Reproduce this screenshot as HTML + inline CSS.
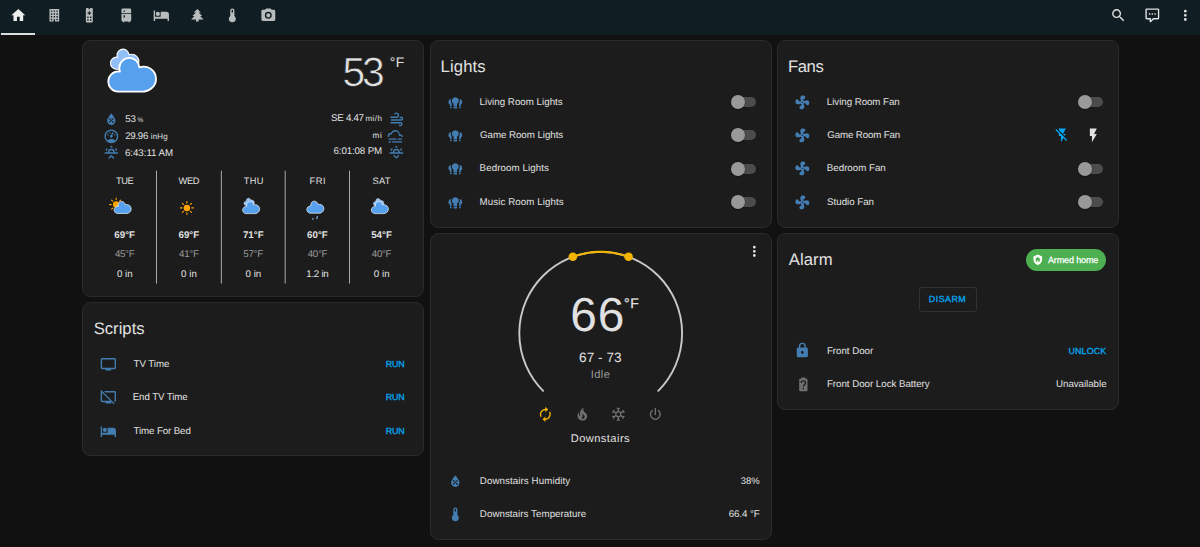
<!DOCTYPE html>
<html lang="en"><head><meta charset="utf-8"><title>Home</title>
<style>
html,body{margin:0;padding:0;background:#111}
body{width:1200px;height:547px;overflow:hidden;position:relative;font-family:"Liberation Sans",sans-serif;color:#e1e1e1;text-rendering:geometricPrecision}
.hdr{position:absolute;left:0;top:0;width:1200px;height:34.8px;background:#101e24;display:block}
main{display:block}
.ind{position:absolute;left:1.2px;top:32.7px;width:34px;height:2.2px;background:#dcdcdc}
.card{position:absolute;display:block;box-sizing:border-box;background:#1c1c1c;border:1px solid #2b2b2b;border-radius:8.3px}
.i{position:absolute;display:block;overflow:visible}
.ov{position:absolute;width:1200px;height:547px;display:block;pointer-events:none;overflow:visible}
.t{position:absolute;white-space:pre;line-height:1;display:block}
.trk{position:absolute;width:22.2px;height:9.8px;border-radius:5px;background:#4c4c4c}
.knb{position:absolute;width:14px;height:14px;border-radius:50%;background:#999;box-shadow:0 0.7px 1.4px rgba(0,0,0,.45)}
.chip{position:absolute;box-sizing:border-box;border-radius:11px;background:#4caf50}
.btn{position:absolute;box-sizing:border-box;border:1px solid #323232;border-radius:3px}
</style></head>
<body>
<header class="hdr">
<svg class="i" style="left:9.66px;top:6.76px;width:16.67px;height:16.67px;" viewBox="0 0 24 24"><path fill="#eeeeee" d="M10,20V14H14V20H19V12H22L12,3L2,12H5V20H10Z"/></svg>
<svg class="i" style="left:45.77px;top:6.76px;width:16.67px;height:16.67px;" viewBox="0 0 24 24"><path fill="#b9bcbd" d="M5,3V21H11V17.5H13V21H19V3H5M7,5H9V7H7V5M11,5H13V7H11V5M15,5H17V7H15V5M7,9H9V11H7V9M11,9H13V11H11V9M15,9H17V11H15V9M7,13H9V15H7V13M11,13H13V15H11V13M15,13H17V15H15V13M7,17H9V19H7V17M15,17H17V19H15V17Z"/></svg>
<svg class="i" style="left:81.37px;top:6.76px;width:16.67px;height:16.67px;" viewBox="0 0 24 24"><path fill="#b9bcbd" d="M8.5,1.5H15.5A1.5,1.5 0 0,1 17,3V21A1.5,1.5 0 0,1 15.500,22.5H8.5A1.5,1.5 0 0,1 7,21V3A1.5,1.5 0 0,1 8.5,1.500M11,1.500V3.300H13V1.500H11M11.200,6.300V8H9.500V9.600H11.200V11.300H12.800V9.600H14.500V8H12.800V6.300H11.200M9,13.800V15.800H11V13.800H9M13,13.800V15.800H15V13.800H13M9,17.800V19.800H11V17.800H9M13,17.800V19.800H15V17.800H13Z"/></svg>
<svg class="i" style="left:118.06px;top:6.76px;width:16.67px;height:16.67px;" viewBox="0 0 24 24"><path fill="#b9bcbd" d="M7,2H17A2,2 0 0,1 19,4V9H5V4A2,2 0 0,1 7,2M19,19A2,2 0 0,1 17,21V22H15V21H9V22H7V21A2,2 0 0,1 5,19V10H19V19M8,5V7H10V5H8M8,12V15H10V12H8Z"/></svg>
<svg class="i" style="left:152.86px;top:6.76px;width:16.67px;height:16.67px;" viewBox="0 0 24 24"><path fill="#b9bcbd" d="M19,7H11V14H3V5H1V20H3V17H21V20H23V11A4,4 0 0,0 19,7M7,13A3,3 0 0,0 10,10A3,3 0 0,0 7,7A3,3 0 0,0 4,10A3,3 0 0,0 7,13Z"/></svg>
<svg class="i" style="left:188.97px;top:6.76px;width:16.67px;height:16.67px;" viewBox="0 0 24 24"><path fill="#b9bcbd" d="M10,21V18H3L8,13H5L10,8H7L12,3L17,8H14L19,13H16L21,18H14V21H10Z"/></svg>
<svg class="i" style="left:224.36px;top:6.76px;width:16.67px;height:16.67px;" viewBox="0 0 24 24"><path fill="#b9bcbd" d="M15,13V5A3,3 0 0,0 12,2A3,3 0 0,0 9,5V13A5,5 0 0,0 7,17A5,5 0 0,0 12,22A5,5 0 0,0 17,17A5,5 0 0,0 15,13M12,4A1,1 0 0,1 13,5V8H11V5A1,1 0 0,1 12,4Z"/></svg>
<svg class="i" style="left:260.47px;top:6.76px;width:16.67px;height:16.67px;" viewBox="0 0 24 24"><path fill="#b9bcbd" d="M4,4H7L9,2H15L17,4H20A2,2 0 0,1 22,6V18A2,2 0 0,1 20,20H4A2,2 0 0,1 2,18V6A2,2 0 0,1 4,4M12,7A5,5 0 0,0 7,12A5,5 0 0,0 12,17A5,5 0 0,0 17,12A5,5 0 0,0 12,7M12,9A3,3 0 0,1 15,12A3,3 0 0,1 12,15A3,3 0 0,1 9,12A3,3 0 0,1 12,9Z"/></svg>
<div class="ind"></div>
<svg class="i" style="left:1109.66px;top:6.96px;width:16.67px;height:16.67px;" viewBox="0 0 24 24"><path fill="#e1e1e1" d="M9.5,3A6.5,6.5 0 0,1 16,9.5C16,11.11 15.41,12.59 14.44,13.73L14.71,14H15.5L20.5,19L19,20.5L14,15.5V14.71L13.73,14.44C12.59,15.41 11.11,16 9.5,16A6.5,6.5 0 0,1 3,9.5A6.5,6.5 0 0,1 9.5,3M9.5,5C7,5 5,7 5,9.5C5,12 7,14 9.5,14C12,14 14,12 14,9.5C14,7 12,5 9.5,5Z"/></svg>
<svg class="i" style="left:1143.57px;top:7.16px;width:16.67px;height:16.67px;" viewBox="0 0 24 24"><path fill="#e1e1e1" d="M9,22A1,1 0 0,1 8,21V18H4A2,2 0 0,1 2,16V4C2,2.89 2.9,2 4,2H20A2,2 0 0,1 22,4V16A2,2 0 0,1 20,18H13.9L10.2,21.71C10,21.9 9.75,22 9.5,22V22H9M10,16V19.08L13.08,16H20V4H4V16H10M17,11H15V9H17V11M13,11H11V9H13V11M9,11H7V9H9V11Z"/></svg>
<svg class="i" style="left:1177.07px;top:6.96px;width:16.67px;height:16.67px;" viewBox="0 0 24 24"><path fill="#e1e1e1" d="M12,16A2,2 0 0,1 14,18A2,2 0 0,1 12,20A2,2 0 0,1 10,18A2,2 0 0,1 12,16M12,10A2,2 0 0,1 14,12A2,2 0 0,1 12,14A2,2 0 0,1 10,12A2,2 0 0,1 12,10M12,4A2,2 0 0,1 14,6A2,2 0 0,1 12,8A2,2 0 0,1 10,6A2,2 0 0,1 12,4Z"/></svg>
</header>
<main>
<section class="card" aria-label="Weather" style="left:82px;top:40px;width:342px;height:257px">
<svg class="ov" style="left:-83px;top:-41px" viewBox="0 0 1200 547"><path transform="translate(96,29.79) scale(0.9)" d="M47.7,35.4c0-4.6-3.7-8.2-8.2-8.2c-1,0-1.9,0.2-2.8,0.5c-0.3-3.4-3.1-6.2-6.6-6.2c-3.700,0-6.700,3-6.700,6.700c0,0.800,0.200,1.600,0.400,2.300c-0.300-0.100-0.700-0.100-1-0.100c-3.700,0-6.700,3-6.700,6.700c0,3.600,2.900,6.600,6.500,6.700l17.200,0C44.200,43.300,47.700,39.800,47.700,35.400z" fill="#91C0F8" stroke="#fff" stroke-linejoin="round" stroke-width="1.2"/><path transform="translate(83.97,25.48) scale(1.51)" d="M47.7,35.4c0-4.6-3.7-8.2-8.2-8.2c-1,0-1.9,0.2-2.8,0.5c-0.3-3.4-3.1-6.2-6.6-6.2c-3.700,0-6.700,3-6.700,6.700c0,0.800,0.200,1.600,0.400,2.300c-0.300-0.100-0.700-0.100-1-0.100c-3.700,0-6.700,3-6.700,6.700c0,3.600,2.900,6.600,6.500,6.700l17.200,0C44.200,43.300,47.700,39.800,47.700,35.400z" fill="#57A0EE" stroke="#fff" stroke-linejoin="round" stroke-width="1.2"/><g transform="translate(116.15,204.6) scale(0.54)" stroke="#ffa500" stroke-width="2" stroke-linecap="round" fill="none"><line transform="rotate(0)" x1="0" y1="9" x2="0" y2="12"/><line transform="rotate(45)" x1="0" y1="9" x2="0" y2="12"/><line transform="rotate(90)" x1="0" y1="9" x2="0" y2="12"/><line transform="rotate(135)" x1="0" y1="9" x2="0" y2="12"/><line transform="rotate(180)" x1="0" y1="9" x2="0" y2="12"/><line transform="rotate(225)" x1="0" y1="9" x2="0" y2="12"/><line transform="rotate(270)" x1="0" y1="9" x2="0" y2="12"/><line transform="rotate(315)" x1="0" y1="9" x2="0" y2="12"/><circle r="5" fill="#ffa500"/></g><path transform="translate(105.43,189.86) scale(0.54)" d="M47.7,35.4c0-4.6-3.7-8.2-8.2-8.2c-1,0-1.9,0.2-2.8,0.5c-0.3-3.4-3.1-6.2-6.6-6.2c-3.700,0-6.700,3-6.700,6.700c0,0.800,0.200,1.600,0.400,2.300c-0.300-0.100-0.700-0.100-1-0.100c-3.700,0-6.700,3-6.700,6.700c0,3.600,2.900,6.600,6.500,6.700l17.200,0C44.200,43.300,47.700,39.800,47.700,35.400z" fill="#57A0EE" stroke="#fff" stroke-linejoin="round" stroke-width="1.2"/><g transform="translate(186.9,207.9) scale(0.54)" stroke="#ffa500" stroke-width="2" stroke-linecap="round" fill="none"><line transform="rotate(0)" x1="0" y1="9" x2="0" y2="12"/><line transform="rotate(45)" x1="0" y1="9" x2="0" y2="12"/><line transform="rotate(90)" x1="0" y1="9" x2="0" y2="12"/><line transform="rotate(135)" x1="0" y1="9" x2="0" y2="12"/><line transform="rotate(180)" x1="0" y1="9" x2="0" y2="12"/><line transform="rotate(225)" x1="0" y1="9" x2="0" y2="12"/><line transform="rotate(270)" x1="0" y1="9" x2="0" y2="12"/><line transform="rotate(315)" x1="0" y1="9" x2="0" y2="12"/><circle r="5" fill="#ffa500"/></g><path transform="translate(238.66,191.1) scale(0.33)" d="M47.7,35.4c0-4.6-3.7-8.2-8.2-8.2c-1,0-1.9,0.2-2.8,0.5c-0.3-3.4-3.1-6.2-6.6-6.2c-3.700,0-6.700,3-6.700,6.700c0,0.800,0.200,1.600,0.400,2.300c-0.300-0.100-0.700-0.100-1-0.100c-3.700,0-6.700,3-6.700,6.700c0,3.600,2.900,6.600,6.500,6.700l17.200,0C44.200,43.300,47.700,39.800,47.700,35.400z" fill="#91C0F8" stroke="#fff" stroke-linejoin="round" stroke-width="1.2"/><path transform="translate(233.93,189.96) scale(0.54)" d="M47.7,35.4c0-4.6-3.7-8.2-8.2-8.2c-1,0-1.9,0.2-2.8,0.5c-0.3-3.4-3.1-6.2-6.6-6.2c-3.700,0-6.700,3-6.700,6.700c0,0.800,0.200,1.600,0.400,2.300c-0.300-0.100-0.700-0.100-1-0.100c-3.700,0-6.700,3-6.700,6.700c0,3.600,2.900,6.600,6.500,6.700l17.200,0C44.200,43.300,47.700,39.800,47.700,35.400z" fill="#57A0EE" stroke="#fff" stroke-linejoin="round" stroke-width="1.2"/><path transform="translate(298.13,189.56) scale(0.54)" d="M47.7,35.4c0-4.6-3.7-8.2-8.2-8.2c-1,0-1.9,0.2-2.8,0.5c-0.3-3.4-3.1-6.2-6.6-6.2c-3.700,0-6.700,3-6.700,6.700c0,0.800,0.200,1.600,0.400,2.300c-0.300-0.100-0.700-0.100-1-0.100c-3.700,0-6.700,3-6.700,6.700c0,3.600,2.900,6.600,6.500,6.700l17.200,0C44.200,43.300,47.700,39.800,47.700,35.400z" fill="#57A0EE" stroke="#fff" stroke-linejoin="round" stroke-width="1.2"/><g stroke="#91C0F8" stroke-width="1.1" stroke-linecap="round"><line x1="313" y1="218.3" x2="312.8" y2="219.3"/><line x1="317.3" y1="216.4" x2="316.9" y2="218.6"/></g><path transform="translate(368.16,191.4) scale(0.33)" d="M47.7,35.4c0-4.6-3.7-8.2-8.2-8.2c-1,0-1.9,0.2-2.8,0.5c-0.3-3.4-3.1-6.2-6.6-6.2c-3.700,0-6.700,3-6.700,6.700c0,0.800,0.200,1.600,0.400,2.300c-0.300-0.100-0.700-0.100-1-0.100c-3.700,0-6.700,3-6.700,6.700c0,3.600,2.900,6.600,6.500,6.700l17.200,0C44.200,43.300,47.700,39.800,47.700,35.400z" fill="#91C0F8" stroke="#fff" stroke-linejoin="round" stroke-width="1.2"/><path transform="translate(362.63,189.96) scale(0.54)" d="M47.7,35.4c0-4.6-3.7-8.2-8.2-8.2c-1,0-1.9,0.2-2.8,0.5c-0.3-3.4-3.1-6.2-6.6-6.2c-3.700,0-6.700,3-6.700,6.700c0,0.800,0.200,1.600,0.400,2.300c-0.300-0.100-0.700-0.100-1-0.100c-3.700,0-6.700,3-6.700,6.700c0,3.600,2.900,6.600,6.500,6.700l17.200,0C44.200,43.300,47.700,39.800,47.700,35.400z" fill="#57A0EE" stroke="#fff" stroke-linejoin="round" stroke-width="1.2"/><line x1="156.5" y1="170.7" x2="156.5" y2="283.6" stroke="#d9d9d9" stroke-width="0.75"/><line x1="221.35" y1="170.7" x2="221.35" y2="283.6" stroke="#d9d9d9" stroke-width="0.75"/><line x1="285.2" y1="170.7" x2="285.2" y2="283.6" stroke="#d9d9d9" stroke-width="0.75"/><line x1="349.5" y1="170.7" x2="349.5" y2="283.6" stroke="#d9d9d9" stroke-width="0.75"/></svg>
<span class="t" style="left:259.4px;top:11px;font-size:40.8px;color:#e1e1e1;letter-spacing:-3.05px;-webkit-text-stroke:0.65px #1c1c1c;">53</span>
<span class="t" style="left:306.85px;top:14px;font-size:14px;color:#e1e1e1;letter-spacing:0.4px;">°F</span>
<svg class="i" style="left:19.66px;top:70.06px;width:16.67px;height:16.67px;" viewBox="0 0 24 24"><path fill="#437db1" d="M12,3.25C12,3.25 6,10 6,14C6,17.32 8.69,20 12,20A6,6 0 0,0 18,14C18,10 12,3.25 12,3.25M14.47,9.97L15.53,11.03L9.53,17.03L8.47,15.97M9.75,10A1.25,1.25 0 0,1 11,11.25A1.25,1.25 0 0,1 9.75,12.5A1.25,1.25 0 0,1 8.5,11.25A1.25,1.25 0 0,1 9.75,10M14.25,14.5A1.25,1.25 0 0,1 15.5,15.75A1.25,1.25 0 0,1 14.25,17A1.25,1.25 0 0,1 13,15.75A1.25,1.25 0 0,1 14.25,14.5Z"/></svg>
<svg class="i" style="left:19.66px;top:86.76px;width:16.67px;height:16.67px;" viewBox="0 0 24 24"><path fill="#437db1" d="M12,2A10,10 0 0,0 2,12A10,10 0 0,0 12,22A10,10 0 0,0 22,12A10,10 0 0,0 12,2M12,4A8,8 0 0,1 20,12C20,14.4 19,16.5 17.3,18C15.9,16.7 14,16 12,16C10,16 8.2,16.7 6.7,18C5,16.5 4,14.4 4,12A8,8 0 0,1 12,4M14,5.89C13.62,5.9 13.26,6.15 13.1,6.54L11.81,9.77L11.71,10C11,10.13 10.41,10.6 10.14,11.26C9.73,12.29 10.23,13.45 11.26,13.86C12.29,14.27 13.45,13.77 13.86,12.74C14.12,12.08 14,11.32 13.57,10.76L13.67,10.5L14.96,7.29L14.97,7.26C15.17,6.75 14.92,6.17 14.41,5.96C14.28,5.91 14.15,5.89 14,5.89M10,6A1,1 0 0,0 9,7A1,1 0 0,0 10,8A1,1 0 0,0 11,7A1,1 0 0,0 10,6M7,9A1,1 0 0,0 6,10A1,1 0 0,0 7,11A1,1 0 0,0 8,10A1,1 0 0,0 7,9M17,9A1,1 0 0,0 16,10A1,1 0 0,0 17,11A1,1 0 0,0 18,10A1,1 0 0,0 17,9Z"/></svg>
<svg class="i" style="left:19.87px;top:103.47px;width:16.67px;height:16.67px;" viewBox="0 0 24 24"><path fill="#437db1" d="M3,12H7A5,5 0 0,1 12,7A5,5 0 0,1 17,12H21A1,1 0 0,1 22,13A1,1 0 0,1 21,14H3A1,1 0 0,1 2,13A1,1 0 0,1 3,12M15,12A3,3 0 0,0 12,9A3,3 0 0,0 9,12H15M12,2L14.39,5.42C13.65,5.15 12.84,5 12,5C11.16,5 10.35,5.15 9.61,5.42L12,2M3.34,7L7.5,6.65C6.9,7.16 6.36,7.78 5.94,8.5C5.5,9.24 5.25,10 5.11,10.79L3.34,7M20.65,7L18.88,10.79C18.74,10 18.47,9.23 18.05,8.5C17.63,7.78 17.1,7.15 16.5,6.64L20.65,7M12.71,16.3L15.82,19.41C16.21,19.8 16.21,20.43 15.82,20.82C15.43,21.21 14.8,21.21 14.41,20.82L12,18.41L9.59,20.82C9.2,21.21 8.57,21.21 8.18,20.82C7.79,20.43 7.79,19.8 8.18,19.41L11.29,16.3C11.5,16.1 11.74,16 12,16C12.26,16 12.5,16.1 12.71,16.3Z"/></svg>
<svg class="i" style="left:304.87px;top:70.16px;width:16.67px;height:16.67px;" viewBox="0 0 24 24"><path fill="#437db1" d="M4,10A1,1 0 0,1 3,9A1,1 0 0,1 4,8H12A2,2 0 0,0 14,6A2,2 0 0,0 12,4C11.45,4 10.95,4.22 10.59,4.59C10.2,5 9.56,5 9.17,4.59C8.78,4.2 8.78,3.56 9.17,3.17C9.9,2.45 10.9,2 12,2A4,4 0 0,1 16,6A4,4 0 0,1 12,10H4M19,12A1,1 0 0,0 20,11A1,1 0 0,0 19,10C18.72,10 18.47,10.11 18.29,10.29C17.9,10.68 17.27,10.68 16.88,10.29C16.5,9.9 16.5,9.27 16.88,8.88C17.42,8.34 18.17,8 19,8A3,3 0 0,1 22,11A3,3 0 0,1 19,14H5A1,1 0 0,1 4,13A1,1 0 0,1 5,12H19M18,18H4A1,1 0 0,1 3,17A1,1 0 0,1 4,16H18A3,3 0 0,1 21,19A3,3 0 0,1 18,22C17.17,22 16.42,21.66 15.88,21.12C15.5,20.73 15.5,20.1 15.88,19.71C16.27,19.32 16.9,19.32 17.29,19.71C17.47,19.89 17.72,20 18,20A1,1 0 0,0 19,19A1,1 0 0,0 18,18Z"/></svg>
<svg class="i" style="left:304.47px;top:86.97px;width:16.67px;height:16.67px;" viewBox="0 0 24 24"><path fill="#437db1" d="M3,15H13A1,1 0 0,1 14,16A1,1 0 0,1 13,17H3A1,1 0 0,1 2,16A1,1 0 0,1 3,15M16,15H21A1,1 0 0,1 22,16A1,1 0 0,1 21,17H16A1,1 0 0,1 15,16A1,1 0 0,1 16,15M1,12A5,5 0 0,1 6,7C7,4.65 9.3,3 12,3C15.43,3 18.24,5.66 18.5,9.03L19,9C21.19,9 22.97,10.76 23,13H21A2,2 0 0,0 19,11H17V10A5,5 0 0,0 12,5C9.5,5 7.45,6.82 7.06,9.19C6.73,9.07 6.37,9 6,9A3,3 0 0,0 3,12C3,12.35 3.06,12.69 3.17,13H1.1L1,12M3,19H5A1,1 0 0,1 6,20A1,1 0 0,1 5,21H3A1,1 0 0,1 2,20A1,1 0 0,1 3,19M8,19H21A1,1 0 0,1 22,20A1,1 0 0,1 21,21H8A1,1 0 0,1 7,20A1,1 0 0,1 8,19Z"/></svg>
<svg class="i" style="left:304.67px;top:103.16px;width:16.67px;height:16.67px;" viewBox="0 0 24 24"><path fill="#437db1" d="M3,12H7A5,5 0 0,1 12,7A5,5 0 0,1 17,12H21A1,1 0 0,1 22,13A1,1 0 0,1 21,14H3A1,1 0 0,1 2,13A1,1 0 0,1 3,12M15,12A3,3 0 0,0 12,9A3,3 0 0,0 9,12H15M12,2L14.39,5.42C13.65,5.15 12.84,5 12,5C11.16,5 10.35,5.15 9.61,5.42L12,2M3.34,7L7.5,6.65C6.9,7.16 6.36,7.78 5.94,8.5C5.5,9.24 5.25,10 5.11,10.79L3.34,7M20.65,7L18.88,10.79C18.74,10 18.47,9.23 18.05,8.5C17.63,7.78 17.1,7.15 16.5,6.64L20.65,7M12.71,20.71L15.82,17.6C16.21,17.21 16.21,16.57 15.82,16.18C15.43,15.79 14.8,15.79 14.41,16.18L12,18.59L9.59,16.18C9.2,15.79 8.57,15.79 8.18,16.18C7.79,16.57 7.79,17.21 8.18,17.6L11.29,20.71C11.5,20.9 11.74,21 12,21C12.26,21 12.5,20.9 12.71,20.71Z"/></svg>
<span class="t" style="left:42.15px;top:74px;font-size:9.72px;color:#e1e1e1;letter-spacing:-0.05px;">53</span>
<span class="t" style="left:54.6px;top:77px;font-size:6.6px;color:#e1e1e1;">%</span>
<span class="t" style="left:42.15px;top:91px;font-size:9.72px;color:#e1e1e1;letter-spacing:-0.26px;">29.96</span>
<span class="t" style="left:67.7px;top:92px;font-size:7.9px;color:#e1e1e1;letter-spacing:0.22px;">inHg</span>
<span class="t" style="left:41.9px;top:108px;font-size:9.72px;color:#e1e1e1;letter-spacing:-0.02px;">6:43:11 AM</span>
<span class="t" style="left:282.4px;top:74px;font-size:8px;color:#e1e1e1;letter-spacing:0.45px;">mi/h</span>
<span class="t" style="left:248px;top:73px;font-size:9.72px;color:#e1e1e1;letter-spacing:-0.26px;">SE 4.47</span>
<span class="t" style="left:289.6px;top:91px;font-size:8.2px;color:#e1e1e1;letter-spacing:0.65px;">mi</span>
<span class="t" style="left:250.5px;top:106px;font-size:9.72px;color:#e1e1e1;letter-spacing:-0.11px;">6:01:08 PM</span>
<span class="t" style="left:33px;top:136px;font-size:9.3px;color:#e1e1e1;letter-spacing:-0.43px;">TUE</span>
<span class="t" style="left:31.3px;top:190px;font-size:9.72px;color:#e1e1e1;font-weight:700;letter-spacing:0.02px;">69°F</span>
<span class="t" style="left:31.9px;top:209px;font-size:9.72px;color:#9b9b9b;letter-spacing:-0.3px;">45°F</span>
<span class="t" style="left:33.9px;top:229px;font-size:9.72px;color:#e1e1e1;letter-spacing:0.03px;">0 in</span>
<span class="t" style="left:95.55px;top:136px;font-size:9.3px;color:#e1e1e1;letter-spacing:-0.4px;">WED</span>
<span class="t" style="left:95.5px;top:190px;font-size:9.72px;color:#e1e1e1;font-weight:700;letter-spacing:0.02px;">69°F</span>
<span class="t" style="left:96.1px;top:209px;font-size:9.72px;color:#9b9b9b;letter-spacing:-0.3px;">41°F</span>
<span class="t" style="left:98.1px;top:229px;font-size:9.72px;color:#e1e1e1;letter-spacing:0.03px;">0 in</span>
<span class="t" style="left:160.65px;top:136px;font-size:9.3px;color:#e1e1e1;letter-spacing:0.4px;">THU</span>
<span class="t" style="left:159.9px;top:190px;font-size:9.72px;color:#e1e1e1;font-weight:700;letter-spacing:0.02px;">71°F</span>
<span class="t" style="left:160.25px;top:209px;font-size:9.72px;color:#9b9b9b;letter-spacing:-0.22px;">57°F</span>
<span class="t" style="left:162.5px;top:229px;font-size:9.72px;color:#e1e1e1;letter-spacing:0.03px;">0 in</span>
<span class="t" style="left:226.5px;top:136px;font-size:9.3px;color:#e1e1e1;letter-spacing:0.5px;">FRI</span>
<span class="t" style="left:224.1px;top:190px;font-size:9.72px;color:#e1e1e1;font-weight:700;letter-spacing:0.02px;">60°F</span>
<span class="t" style="left:224.7px;top:209px;font-size:9.72px;color:#9b9b9b;letter-spacing:-0.3px;">40°F</span>
<span class="t" style="left:223.25px;top:229px;font-size:9.72px;color:#e1e1e1;letter-spacing:-0.25px;">1.2 in</span>
<span class="t" style="left:289.6px;top:136px;font-size:9.3px;color:#e1e1e1;letter-spacing:0.25px;">SAT</span>
<span class="t" style="left:288.2px;top:190px;font-size:9.72px;color:#e1e1e1;font-weight:700;letter-spacing:0.02px;">54°F</span>
<span class="t" style="left:288.8px;top:209px;font-size:9.72px;color:#9b9b9b;letter-spacing:-0.3px;">40°F</span>
<span class="t" style="left:290.8px;top:229px;font-size:9.72px;color:#e1e1e1;letter-spacing:0.03px;">0 in</span>
</section>
<section class="card" aria-label="Scripts" style="left:82px;top:302px;width:342px;height:154px">
<span class="t" style="left:10.65px;top:18px;font-size:16.67px;color:#e1e1e1;letter-spacing:0.01px;">Scripts</span>
<svg class="i" style="left:16.97px;top:52.97px;width:16.67px;height:16.67px;" viewBox="0 0 24 24"><path fill="#437db1" d="M21,17H3V5H21M21,3H3A2,2 0 0,0 1,5V17A2,2 0 0,0 3,19H8V21H16V19H21A2,2 0 0,0 23,17V5A2,2 0 0,0 21,3Z"/></svg>
<span class="t" style="left:50.5px;top:57px;font-size:9.72px;color:#e1e1e1;letter-spacing:-0.04px;">TV Time</span>
<span class="t" style="left:302.7px;top:57px;font-size:8.9px;color:#03a9f4;letter-spacing:-0.07px;-webkit-text-stroke:0.3px #03a9f4;">RUN</span>
<svg class="i" style="left:16.97px;top:86.06px;width:16.67px;height:16.67px;" viewBox="0 0 24 24"><path fill="#437db1" d="M0.5,2.77L1.78,1.5L21,20.72L19.73,22L16.73,19H16V21H8V19H3A2,2 0 0,1 1,17V5C1,4.5 1.17,4.07 1.46,3.73L0.5,2.77M21,17V5H7.82L5.82,3H21A2,2 0 0,1 23,5V17C23,17.85 22.45,18.59 21.7,18.87L19.82,17H21M3,17H14.73L3,5.27V17Z"/></svg>
<span class="t" style="left:49.75px;top:90px;font-size:9.72px;color:#e1e1e1;letter-spacing:-0.11px;">End TV Time</span>
<span class="t" style="left:302.7px;top:90px;font-size:8.9px;color:#03a9f4;letter-spacing:-0.07px;-webkit-text-stroke:0.3px #03a9f4;">RUN</span>
<svg class="i" style="left:16.97px;top:119.56px;width:16.67px;height:16.67px;" viewBox="0 0 24 24"><path fill="#437db1" d="M19,7H11V14H3V5H1V20H3V17H21V20H23V11A4,4 0 0,0 19,7M7,13A3,3 0 0,0 10,10A3,3 0 0,0 7,7A3,3 0 0,0 4,10A3,3 0 0,0 7,13Z"/></svg>
<span class="t" style="left:50.5px;top:124px;font-size:9.72px;color:#e1e1e1;letter-spacing:-0.11px;">Time For Bed</span>
<span class="t" style="left:302.7px;top:124px;font-size:8.9px;color:#03a9f4;letter-spacing:-0.07px;-webkit-text-stroke:0.3px #03a9f4;">RUN</span>
</section>
<section class="card" aria-label="Lights" style="left:430px;top:40px;width:342px;height:188px">
<span class="t" style="left:9.55px;top:18px;font-size:16.67px;color:#e1e1e1;letter-spacing:0.13px;">Lights</span>
<svg class="i" style="left:16.27px;top:52.66px;width:16.67px;height:16.67px;" viewBox="0 0 24 24"><path fill="#437db1" d="M12,4.65A5.05,5.05 0 0,1 14.5,14.1V17.6H9.5V14.1A5.05,5.05 0 0,1 12,4.65ZM9.5,18.3H14.5V20A1,1 0 0,1 13.5,21H10.5A1,1 0 0,1 9.5,20ZM5.85,7.05A4.5,4.5 0 0,0 4.3,15.43V17.6H6.6V13.67A6.7,6.7 0 0,1 5.85,7.05ZM4.3,18.3H6.6V20.6H5.1A0.8,0.8 0 0,1 4.3,19.8ZM18.15,7.05A4.5,4.5 0 0,1 19.7,15.43V17.6H17.4V13.67A6.7,6.7 0 0,0 18.15,7.05ZM17.4,18.3H19.7V19.8A0.8,0.8 0 0,1 18.9,20.6H17.4Z"/></svg>
<span class="t" style="left:48.55px;top:57px;font-size:9.72px;color:#e1e1e1;letter-spacing:0.03px;">Living Room Lights</span>
<div class="trk" style="left:302.6px;top:56.1px"></div><div class="knb" style="left:300px;top:54px"></div>
<svg class="i" style="left:16.27px;top:86px;width:16.67px;height:16.67px;" viewBox="0 0 24 24"><path fill="#437db1" d="M12,4.65A5.05,5.05 0 0,1 14.5,14.1V17.6H9.5V14.1A5.05,5.05 0 0,1 12,4.65ZM9.5,18.3H14.5V20A1,1 0 0,1 13.5,21H10.5A1,1 0 0,1 9.5,20ZM5.85,7.05A4.5,4.5 0 0,0 4.3,15.43V17.6H6.6V13.67A6.7,6.7 0 0,1 5.85,7.05ZM4.3,18.3H6.6V20.6H5.1A0.8,0.8 0 0,1 4.3,19.8ZM18.15,7.05A4.5,4.5 0 0,1 19.7,15.43V17.6H17.4V13.67A6.7,6.7 0 0,0 18.15,7.05ZM17.4,18.3H19.7V19.8A0.8,0.8 0 0,1 18.9,20.6H17.4Z"/></svg>
<span class="t" style="left:49.05px;top:90px;font-size:9.72px;color:#e1e1e1;letter-spacing:-0.04px;">Game Room Lights</span>
<div class="trk" style="left:302.6px;top:89.43px"></div><div class="knb" style="left:300px;top:87.33px"></div>
<svg class="i" style="left:16.27px;top:119.33px;width:16.67px;height:16.67px;" viewBox="0 0 24 24"><path fill="#437db1" d="M12,4.65A5.05,5.05 0 0,1 14.5,14.1V17.6H9.5V14.1A5.05,5.05 0 0,1 12,4.65ZM9.5,18.3H14.5V20A1,1 0 0,1 13.5,21H10.5A1,1 0 0,1 9.5,20ZM5.85,7.05A4.5,4.5 0 0,0 4.3,15.43V17.6H6.6V13.67A6.7,6.7 0 0,1 5.85,7.05ZM4.3,18.3H6.6V20.6H5.1A0.8,0.8 0 0,1 4.3,19.8ZM18.15,7.05A4.5,4.5 0 0,1 19.7,15.43V17.6H17.4V13.67A6.7,6.7 0 0,0 18.15,7.05ZM17.4,18.3H19.7V19.8A0.8,0.8 0 0,1 18.9,20.6H17.4Z"/></svg>
<span class="t" style="left:48.55px;top:123px;font-size:9.72px;color:#e1e1e1;letter-spacing:0.1px;">Bedroom Lights</span>
<div class="trk" style="left:302.6px;top:122.77px"></div><div class="knb" style="left:300px;top:120.67px"></div>
<svg class="i" style="left:16.27px;top:152.66px;width:16.67px;height:16.67px;" viewBox="0 0 24 24"><path fill="#437db1" d="M12,4.65A5.05,5.05 0 0,1 14.5,14.1V17.6H9.5V14.1A5.05,5.05 0 0,1 12,4.65ZM9.5,18.3H14.5V20A1,1 0 0,1 13.5,21H10.5A1,1 0 0,1 9.5,20ZM5.85,7.05A4.5,4.5 0 0,0 4.3,15.43V17.6H6.6V13.67A6.7,6.7 0 0,1 5.85,7.05ZM4.3,18.3H6.6V20.6H5.1A0.8,0.8 0 0,1 4.3,19.8ZM18.15,7.05A4.5,4.5 0 0,1 19.7,15.43V17.6H17.4V13.67A6.7,6.7 0 0,0 18.15,7.05ZM17.4,18.3H19.7V19.8A0.8,0.8 0 0,1 18.9,20.6H17.4Z"/></svg>
<span class="t" style="left:48.55px;top:157px;font-size:9.72px;color:#e1e1e1;letter-spacing:0.09px;">Music Room Lights</span>
<div class="trk" style="left:302.6px;top:156.1px"></div><div class="knb" style="left:300px;top:154px"></div>
</section>
<section class="card" aria-label="Fans" style="left:777px;top:40px;width:342px;height:188px">
<span class="t" style="left:10.05px;top:18px;font-size:16.67px;color:#e1e1e1;letter-spacing:-0.45px;">Fans</span>
<svg class="i" style="left:16.37px;top:52.66px;width:16.67px;height:16.67px;" viewBox="0 0 24 24"><path fill="#437db1" d="M12,11A1,1 0 0,0 11,12A1,1 0 0,0 12,13A1,1 0 0,0 13,12A1,1 0 0,0 12,11M12.5,2C17,2 17.11,5.57 14.75,6.75C13.76,7.24 13.32,8.29 13.13,9.22C13.61,9.42 14.03,9.73 14.35,10.13C18.05,8.13 22.03,8.92 22.03,12.5C22.03,17 18.46,17.1 17.28,14.73C16.78,13.74 15.72,13.3 14.79,13.11C14.59,13.59 14.28,14 13.88,14.34C15.87,18.03 15.08,22 11.5,22C7,22 6.91,18.42 9.27,17.24C10.25,16.75 10.69,15.71 10.89,14.79C10.4,14.59 9.97,14.27 9.65,13.87C5.96,15.85 2,15.07 2,11.5C2,7 5.56,6.89 6.74,9.26C7.24,10.25 8.29,10.68 9.22,10.87C9.41,10.39 9.73,9.97 10.14,9.65C8.15,5.96 8.94,2 12.5,2Z"/></svg>
<span class="t" style="left:48.85px;top:57px;font-size:9.72px;color:#e1e1e1;letter-spacing:-0.04px;">Living Room Fan</span>
<div class="trk" style="left:302.9px;top:56.1px"></div><div class="knb" style="left:300.3px;top:54px"></div>
<svg class="i" style="left:16.37px;top:86px;width:16.67px;height:16.67px;" viewBox="0 0 24 24"><path fill="#437db1" d="M12,11A1,1 0 0,0 11,12A1,1 0 0,0 12,13A1,1 0 0,0 13,12A1,1 0 0,0 12,11M12.5,2C17,2 17.11,5.57 14.75,6.75C13.76,7.24 13.32,8.29 13.13,9.22C13.61,9.42 14.03,9.73 14.35,10.13C18.05,8.13 22.03,8.92 22.03,12.5C22.03,17 18.46,17.1 17.28,14.73C16.78,13.74 15.72,13.3 14.79,13.11C14.59,13.59 14.28,14 13.88,14.34C15.87,18.03 15.08,22 11.5,22C7,22 6.91,18.42 9.27,17.24C10.25,16.75 10.69,15.71 10.89,14.79C10.4,14.59 9.97,14.27 9.65,13.87C5.96,15.85 2,15.07 2,11.5C2,7 5.56,6.89 6.74,9.26C7.24,10.25 8.29,10.68 9.22,10.87C9.41,10.39 9.73,9.97 10.14,9.65C8.15,5.96 8.94,2 12.5,2Z"/></svg>
<span class="t" style="left:49.35px;top:90px;font-size:9.72px;color:#e1e1e1;letter-spacing:-0.15px;">Game Room Fan</span>
<svg class="i" style="left:275.96px;top:86.1px;width:16.67px;height:16.67px;" viewBox="0 0 24 24"><path fill="#03a9f4" d="M17,10H13L17,2H7V4.18L15.46,12.64M3.27,3L2,4.27L7,9.27V13H10V22L13.58,15.86L17.73,20L19,18.73L3.27,3Z"/></svg>
<svg class="i" style="left:306.57px;top:86.4px;width:16.67px;height:16.67px;" viewBox="0 0 24 24"><path fill="#e1e1e1" d="M7,2V13H10V22L17,10H13L17,2H7Z"/></svg>
<svg class="i" style="left:16.37px;top:119.33px;width:16.67px;height:16.67px;" viewBox="0 0 24 24"><path fill="#437db1" d="M12,11A1,1 0 0,0 11,12A1,1 0 0,0 12,13A1,1 0 0,0 13,12A1,1 0 0,0 12,11M12.5,2C17,2 17.11,5.57 14.75,6.75C13.76,7.24 13.32,8.29 13.13,9.22C13.61,9.42 14.03,9.73 14.35,10.13C18.05,8.13 22.03,8.92 22.03,12.5C22.03,17 18.46,17.1 17.28,14.73C16.78,13.74 15.72,13.3 14.79,13.11C14.59,13.59 14.28,14 13.88,14.34C15.87,18.03 15.08,22 11.5,22C7,22 6.91,18.42 9.27,17.24C10.25,16.75 10.69,15.71 10.89,14.79C10.4,14.59 9.97,14.27 9.65,13.87C5.96,15.85 2,15.07 2,11.5C2,7 5.56,6.89 6.74,9.26C7.24,10.25 8.29,10.68 9.22,10.87C9.41,10.39 9.73,9.97 10.14,9.65C8.15,5.96 8.94,2 12.5,2Z"/></svg>
<span class="t" style="left:48.85px;top:123px;font-size:9.72px;color:#e1e1e1;letter-spacing:0px;">Bedroom Fan</span>
<div class="trk" style="left:302.9px;top:122.77px"></div><div class="knb" style="left:300.3px;top:120.67px"></div>
<svg class="i" style="left:16.37px;top:152.66px;width:16.67px;height:16.67px;" viewBox="0 0 24 24"><path fill="#437db1" d="M12,11A1,1 0 0,0 11,12A1,1 0 0,0 12,13A1,1 0 0,0 13,12A1,1 0 0,0 12,11M12.5,2C17,2 17.11,5.57 14.75,6.75C13.76,7.24 13.32,8.29 13.13,9.22C13.61,9.42 14.03,9.73 14.35,10.13C18.05,8.13 22.03,8.92 22.03,12.5C22.03,17 18.46,17.1 17.28,14.73C16.78,13.74 15.72,13.3 14.79,13.11C14.59,13.59 14.28,14 13.88,14.34C15.87,18.03 15.08,22 11.5,22C7,22 6.91,18.42 9.27,17.24C10.25,16.75 10.69,15.71 10.89,14.79C10.4,14.59 9.97,14.27 9.65,13.87C5.96,15.85 2,15.07 2,11.5C2,7 5.56,6.89 6.74,9.26C7.24,10.25 8.29,10.68 9.22,10.87C9.41,10.39 9.73,9.97 10.14,9.65C8.15,5.96 8.94,2 12.5,2Z"/></svg>
<span class="t" style="left:49.1px;top:157px;font-size:9.72px;color:#e1e1e1;letter-spacing:-0.01px;">Studio Fan</span>
<div class="trk" style="left:302.9px;top:156.1px"></div><div class="knb" style="left:300.3px;top:154px"></div>
</section>
<section class="card" aria-label="Alarm" style="left:777px;top:233px;width:342px;height:177px">
<span class="t" style="left:10.75px;top:18px;font-size:16.67px;color:#e1e1e1;letter-spacing:0.1px;">Alarm</span>
<div class="chip" style="left:247.5px;top:14.7px;width:80.9px;height:22px"></div>
<svg class="i" style="left:253.9px;top:19.8px;width:11.6px;height:11.6px;" viewBox="0 0 24 24"><path fill="#fff" d="M11,13H13V16H16V11H18L12,6L6,11H8V16H11V13M12,1L21,5V11C21,16.55 17.16,21.74 12,23C6.84,21.74 3,16.55 3,11V5L12,1Z"/></svg>
<span class="t" style="left:270px;top:22px;font-size:9px;color:#fff;letter-spacing:-0.14px;-webkit-text-stroke:0.25px #fff;">Armed home</span>
<div class="btn" style="left:140.8px;top:53.4px;width:57.9px;height:24.4px"></div>
<span class="t" style="left:150.8px;top:61px;font-size:8.9px;color:#03a9f4;letter-spacing:0.48px;-webkit-text-stroke:0.3px #03a9f4;">DISARM</span>
<svg class="i" style="left:16.46px;top:108.37px;width:16.67px;height:16.67px;" viewBox="0 0 24 24"><path fill="#437db1" d="M12,17A2,2 0 0,0 14,15C14,13.89 13.1,13 12,13A2,2 0 0,0 10,15A2,2 0 0,0 12,17M18,8A2,2 0 0,1 20,10V20A2,2 0 0,1 18,22H6A2,2 0 0,1 4,20V10C4,8.89 4.9,8 6,8H7V6A5,5 0 0,1 12,1A5,5 0 0,1 17,6V8H18M12,3A3,3 0 0,0 9,6V8H15V6A3,3 0 0,0 12,3Z"/></svg>
<span class="t" style="left:48.95px;top:113px;font-size:9.72px;color:#e1e1e1;letter-spacing:-0.03px;">Front Door</span>
<span class="t" style="left:290.5px;top:113px;font-size:8.9px;color:#03a9f4;letter-spacing:0.14px;-webkit-text-stroke:0.3px #03a9f4;">UNLOCK</span>
<svg class="i" style="left:16.56px;top:141.67px;width:16.67px;height:16.67px;" viewBox="0 0 24 24"><path fill="#6f6f6f" d="M15.07,12.25L14.17,13.17C13.63,13.71 13.25,14.18 13.09,15H11.05C11.16,14.1 11.56,13.28 12.17,12.67L13.41,11.41C13.78,11.05 14,10.55 14,10C14,8.89 13.1,8 12,8A2,2 0 0,0 10,10H8A4,4 0 0,1 12,6A4,4 0 0,1 16,10C16,10.88 15.64,11.67 15.07,12.25M13,19H11V17H13M16.67,4H15V2H9V4H7.33A1.33,1.33 0 0,0 6,5.33V20.67C6,21.4 6.6,22 7.33,22H16.67A1.33,1.33 0 0,0 18,20.67V5.33C18,4.6 17.4,4 16.67,4Z"/></svg>
<span class="t" style="left:48.95px;top:146px;font-size:9.72px;color:#e1e1e1;letter-spacing:-0.02px;">Front Door Lock Battery</span>
<span class="t" style="left:278.05px;top:146px;font-size:9.72px;color:#e1e1e1;letter-spacing:-0.03px;">Unavailable</span>
</section>
<section class="card" aria-label="Downstairs thermostat" style="left:430px;top:233px;width:342px;height:307px">
<svg class="ov" style="left:-431px;top:-234px" viewBox="0 0 1200 547"><path d="M543.14,390.86 A81.4,81.4 0 1 1 658.26,390.86" fill="none" stroke="#c8c8c8" stroke-width="1.9" stroke-linecap="round"/><path d="M572.86,256.81 A81.4,81.4 0 0 1 628.54,256.81" fill="none" stroke="#f4b400" stroke-width="2"/><circle cx="572.86" cy="256.81" r="4.3" fill="#f4b400"/><circle cx="628.54" cy="256.81" r="4.3" fill="#f4b400"/></svg>
<svg class="i" style="left:314.87px;top:8.56px;width:16.67px;height:16.67px;" viewBox="0 0 24 24"><path fill="#e1e1e1" d="M12,16A2,2 0 0,1 14,18A2,2 0 0,1 12,20A2,2 0 0,1 10,18A2,2 0 0,1 12,16M12,10A2,2 0 0,1 14,12A2,2 0 0,1 12,14A2,2 0 0,1 10,12A2,2 0 0,1 12,10M12,4A2,2 0 0,1 14,6A2,2 0 0,1 12,8A2,2 0 0,1 10,6A2,2 0 0,1 12,4Z"/></svg>
<span class="t" style="left:139.35px;top:58px;font-size:47.8px;color:#e1e1e1;letter-spacing:0.9px;">66</span>
<span class="t" style="left:192.95px;top:62px;font-size:14px;color:#e1e1e1;letter-spacing:0.6px;-webkit-text-stroke:0.25px #e1e1e1;">°F</span>
<span class="t" style="left:148.05px;top:117px;font-size:13.6px;color:#e1e1e1;letter-spacing:0.04px;">67 - 73</span>
<span class="t" style="left:159.75px;top:136px;font-size:11.1px;color:#9b9b9b;letter-spacing:0.4px;">Idle</span>
<svg class="i" style="left:106.46px;top:171.87px;width:16.67px;height:16.67px;" viewBox="0 0 24 24"><path fill="#f4b400" d="M12,6V9L16,5L12,1V4A8,8 0 0,0 4,12C4,13.57 4.46,15.03 5.24,16.26L6.7,14.8C6.25,13.97 6,13 6,12A6,6 0 0,1 12,6M18.76,7.74L17.3,9.2C17.74,10.04 18,11 18,12A6,6 0 0,1 12,18V15L8,19L12,23V20A8,8 0 0,0 20,12C20,10.43 19.54,8.97 18.76,7.74Z"/></svg>
<svg class="i" style="left:142.56px;top:171.87px;width:16.67px;height:16.67px;" viewBox="0 0 24 24"><path fill="#6f6f6f" d="M17.66,11.2C17.43,10.9 17.15,10.64 16.89,10.38C16.22,9.78 15.46,9.35 14.82,8.72C13.33,7.26 13,4.85 13.95,3C13,3.23 12.17,3.75 11.46,4.32C8.87,6.4 7.85,10.07 9.07,13.22C9.11,13.32 9.15,13.42 9.15,13.55C9.15,13.77 9,13.97 8.8,14.05C8.57,14.15 8.33,14.09 8.14,13.93C8.08,13.88 8.04,13.83 8,13.76C6.87,12.33 6.69,10.28 7.45,8.64C5.78,10 4.87,12.3 5,14.47C5.06,14.97 5.12,15.47 5.29,15.97C5.43,16.57 5.7,17.17 6,17.7C7.08,19.43 8.95,20.67 10.96,20.92C13.1,21.19 15.39,20.8 17.03,19.32C18.86,17.66 19.5,15 18.56,12.72L18.43,12.46C18.22,12 17.66,11.2 17.66,11.2M14.5,17.5C14.22,17.74 13.76,18 13.4,18.1C12.28,18.5 11.16,17.94 10.5,17.28C11.69,17 12.4,16.12 12.61,15.23C12.78,14.43 12.46,13.77 12.33,13C12.21,12.26 12.23,11.63 12.5,10.94C12.69,11.32 12.89,11.7 13.13,12C13.9,13 15.11,13.44 15.37,14.8C15.41,14.94 15.43,15.08 15.43,15.23C15.46,16.05 15.1,16.95 14.5,17.5H14.5Z"/></svg>
<svg class="i" style="left:179.41px;top:171.87px;width:16.67px;height:16.67px;" viewBox="0 0 24 24"><path fill="#6f6f6f" d="M20.79,13.95L18.46,14.57L16.46,13.44V10.56L18.46,9.43L20.79,10.05L21.31,8.12L19.54,7.65L20,5.88L18.07,5.36L17.45,7.69L15.45,8.82L13,7.38V5.12L14.71,3.41L13.29,2L12,3.29L10.71,2L9.29,3.41L11,5.12V7.38L8.5,8.82L6.5,7.69L5.92,5.36L4,5.88L4.47,7.65L2.7,8.12L3.22,10.05L5.55,9.43L7.55,10.56V13.45L5.55,14.58L3.22,13.96L2.7,15.89L4.47,16.36L4,18.12L5.93,18.64L6.55,16.31L8.55,15.18L11,16.62V18.88L9.29,20.59L10.71,22L12,20.71L13.29,22L14.7,20.59L13,18.88V16.62L15.5,15.17L17.5,16.3L18.12,18.63L20,18.12L19.53,16.35L21.3,15.88L20.79,13.95M9.5,10.56L12,9.11L14.5,10.56V13.44L12,14.89L9.5,13.44V10.56Z"/></svg>
<svg class="i" style="left:215.56px;top:171.87px;width:16.67px;height:16.67px;" viewBox="0 0 24 24"><path fill="#6f6f6f" d="M16.56,5.44L15.11,6.89C16.84,7.94 18,9.83 18,12A6,6 0 0,1 12,18A6,6 0 0,1 6,12C6,9.83 7.16,7.94 8.88,6.88L7.44,5.44C5.36,6.88 4,9.28 4,12A8,8 0 0,0 12,20A8,8 0 0,0 20,12C20,9.28 18.64,6.88 16.56,5.44M13,3H11V13H13"/></svg>
<span class="t" style="left:139.75px;top:200px;font-size:11.11px;color:#e1e1e1;letter-spacing:0.43px;">Downstairs</span>
<svg class="i" style="left:16.37px;top:238.67px;width:16.67px;height:16.67px;" viewBox="0 0 24 24"><path fill="#437db1" d="M12,3.25C12,3.25 6,10 6,14C6,17.32 8.69,20 12,20A6,6 0 0,0 18,14C18,10 12,3.25 12,3.25M14.47,9.97L15.53,11.03L9.53,17.03L8.47,15.97M9.75,10A1.25,1.25 0 0,1 11,11.25A1.25,1.25 0 0,1 9.75,12.5A1.25,1.25 0 0,1 8.5,11.25A1.25,1.25 0 0,1 9.75,10M14.25,14.5A1.25,1.25 0 0,1 15.5,15.75A1.25,1.25 0 0,1 14.25,17A1.25,1.25 0 0,1 13,15.75A1.25,1.25 0 0,1 14.25,14.5Z"/></svg>
<span class="t" style="left:48.85px;top:243px;font-size:9.72px;color:#e1e1e1;letter-spacing:0.09px;">Downstairs Humidity</span>
<span class="t" style="left:309.8px;top:243px;font-size:9.5px;color:#e1e1e1;letter-spacing:-0.05px;">38%</span>
<svg class="i" style="left:16.27px;top:271.67px;width:16.67px;height:16.67px;" viewBox="0 0 24 24"><path fill="#437db1" d="M15,13V5A3,3 0 0,0 12,2A3,3 0 0,0 9,5V13A5,5 0 0,0 7,17A5,5 0 0,0 12,22A5,5 0 0,0 17,17A5,5 0 0,0 15,13M12,4A1,1 0 0,1 13,5V8H11V5A1,1 0 0,1 12,4Z"/></svg>
<span class="t" style="left:48.85px;top:276px;font-size:9.72px;color:#e1e1e1;letter-spacing:0.06px;">Downstairs Temperature</span>
<span class="t" style="left:297.65px;top:276px;font-size:9.72px;color:#e1e1e1;letter-spacing:-0.07px;">66.4 °F</span>
</section>
</main>
</body></html>
